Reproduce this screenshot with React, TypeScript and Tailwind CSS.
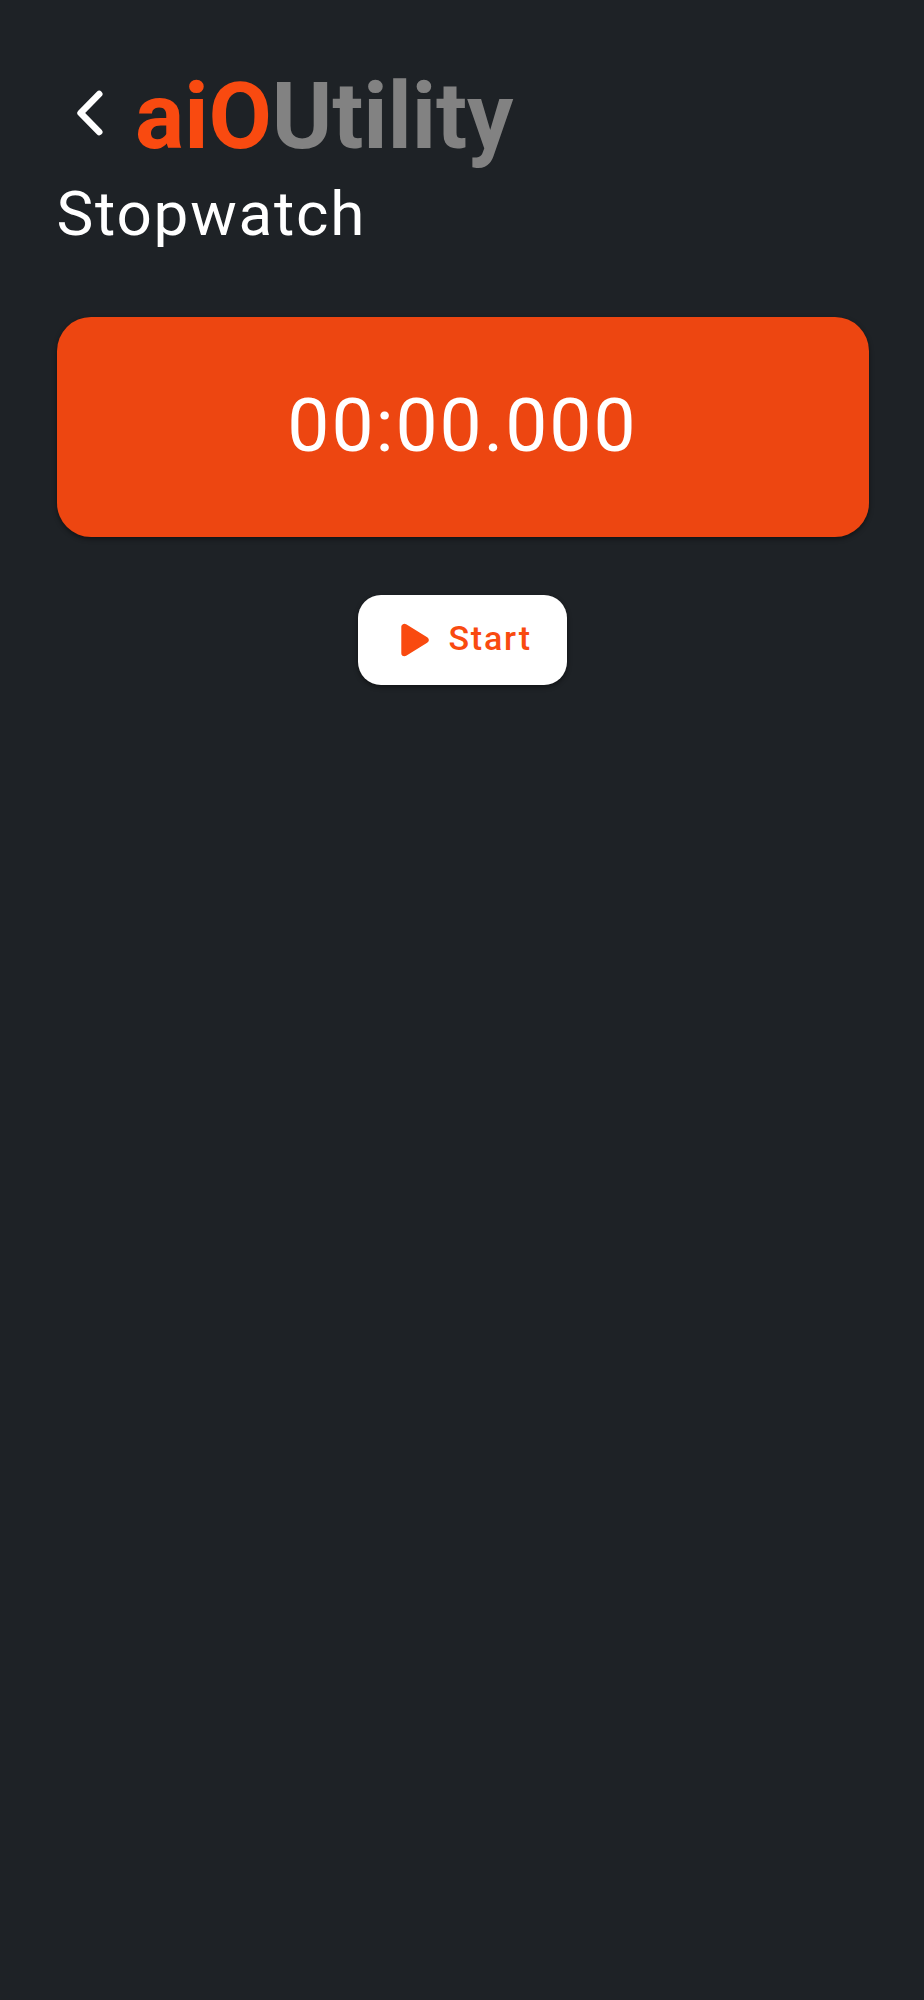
import { useState, useEffect } from "react";

interface BrandTitleProps {
  onBack?: () => void
}

function formatTime(ms: number) {
  const minutes = Math.floor(ms / 60000).toString().padStart(2, "0");
  const seconds = Math.floor((ms % 60000) / 1000).toString().padStart(2, "0");
  const millis = Math.floor(ms % 1000).toString().padStart(3, "0");
  return `${minutes}:${seconds}.${millis}`;
}

function BrandTitle({ onBack }: BrandTitleProps) {
  return (
    <div className="flex items-center">
      <button type="button" aria-label="Back" onClick={onBack} className="ml-[19px] mb-[9px] shrink-0">
        <svg width="28" height="48" viewBox="0 0 28 48" fill="none" className="block">
          <path d="M23.2 5 4.6 24 23.2 43" stroke="white" strokeWidth="6.6" strokeLinecap="round" strokeLinejoin="round" />
        </svg>
      </button>
      <h1 className="ml-[31.5px] text-[92px] leading-[100px] font-bold tracking-[-0.1px] whitespace-nowrap text-[#828282]">
        <span className="text-[#f94a10]">aiO</span>Utility
      </h1>
    </div>
  )
}

export default function App() {
  const [elapsed, setElapsed] = useState(0);
  const [running, setRunning] = useState(false);

  useEffect(() => {
    if (!running) return;
    const startedAt = Date.now() - elapsed;
    const id = setInterval(() => setElapsed(Date.now() - startedAt), 31);
    return () => clearInterval(id);
  }, [running])

  return (
    <main className="flex min-h-[2000px] flex-col bg-[#1e2226] pt-[67px] pr-[54.7px] pl-[56.5px] font-['Roboto',sans-serif] text-white">
      <BrandTitle />
      <h2 className="mt-[11px] text-[62px] leading-[72px] tracking-[1.75px]">Stopwatch</h2>

      <section className="mt-[67px] flex h-[220px] items-center justify-center rounded-[34px] bg-[#ed4611] pb-[3px] shadow-[0_2px_5px_rgba(0,0,0,0.45)]">
        <span className="-ml-px text-[75px] leading-none tracking-[1.9px]">{formatTime(elapsed)}</span>
      </section>

      <button
        type="button"
        onClick={() => setRunning(!running)}
        className="mt-[58px] flex h-[90px] w-[209px] items-center self-center rounded-[23px] bg-white pl-[42px] text-[#f94a10] shadow-[0_2px_5px_rgba(0,0,0,0.45)]"
      >
        <svg width="30" height="34" viewBox="0 0 30 34" className="block shrink-0">
          <path d="M4.5 4v26L25.5 17z" fill="currentColor" stroke="currentColor" strokeWidth="6.4" strokeLinejoin="round" />
        </svg>
        <span className="mb-[4px] ml-[18px] text-[34px] leading-10 font-medium tracking-[1.8px]">{running ? "Stop" : "Start"}</span>
      </button>
    </main>
  )
}
